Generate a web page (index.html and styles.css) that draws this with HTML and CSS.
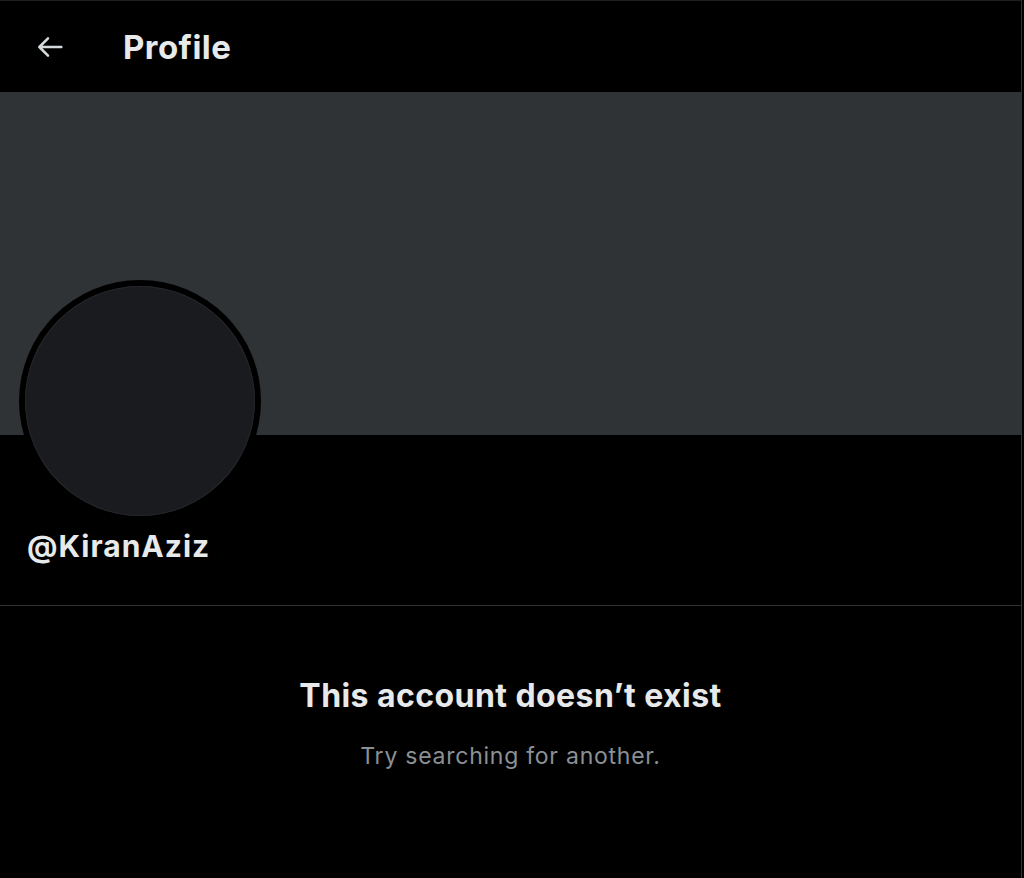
FILE: index.html
```html
<!DOCTYPE html>
<html lang="en">
<head>
<meta charset="utf-8">
<title>Profile</title>
<link rel="stylesheet" href="styles.css">
</head>
<body>
<main class="column">
  <header class="topbar">
    <button class="back" aria-label="Back">
      <svg viewBox="0 0 24 24" width="32" height="32"><path d="M20.5 12H4M10.5 5.5L4 12l6.5 6.5" fill="none" stroke="currentColor" stroke-width="1.9" stroke-linecap="round" stroke-linejoin="round"/></svg>
    </button>
    <h1 class="title">Profile</h1>
  </header>
  <section class="profile">
    <div class="banner"></div>
    <div class="avatar"><div class="avatar-inner"></div></div>
    <div class="info">
      <div class="handle">@KiranAziz</div>
    </div>
  </section>
  <section class="empty">
    <h2 class="empty-title">This account doesn’t exist</h2>
    <p class="empty-sub">Try searching for another.</p>
  </section>
</main>
</body>
</html>
```

FILE: styles.css
```css
html, body {
  margin: 0;
  padding: 0;
  background: #000;
}
body {
  font-family: Inter, "Liberation Sans", sans-serif;
  color: #e7e9ea;
  height: 878px;
  overflow: hidden;
}
.column {
  width: 1022px;
  height: 878px;
  border-right: 1px solid #2f3336;
  border-top: 1px solid #1d1f22;
  box-sizing: border-box;
}
.topbar {
  height: 91px;
  display: flex;
  align-items: center;
  box-sizing: border-box;
  padding-left: 34px;
}
.back {
  background: none;
  border: 0;
  padding: 0;
  color: #d6d9db;
  width: 32px;
  height: 32px;
  display: flex;
  align-items: center;
  justify-content: center;
  margin-right: 57px;
}
.title {
  margin: 0;
  font-size: 33px;
  font-weight: 700;
  letter-spacing: 0.45px;
  color: #e7e9ea;
}
.profile {
  position: relative;
  border-bottom: 1px solid #2f3336;
}
.banner {
  height: 343px;
  background: #2f3336;
}
.avatar {
  position: absolute;
  left: 19px;
  top: 188px;
  width: 242px;
  height: 242px;
  border-radius: 50%;
  background: #000;
  display: flex;
  align-items: center;
  justify-content: center;
}
.avatar-inner {
  width: 230px;
  height: 230px;
  border-radius: 50%;
  background: #1a1b1e;
  box-shadow: inset 0 0 0 1px #25272b;
}
.info {
  height: 170px;
  box-sizing: border-box;
  padding: 93px 0 0 27px;
}
.handle {
  font-size: 30px;
  font-weight: 700;
  letter-spacing: 1px;
  line-height: 36px;
  color: #e7e9ea;
}
.empty {
  text-align: center;
  padding-top: 70px;
}
.empty-title {
  margin: 0;
  font-size: 32px;
  font-weight: 700;
  letter-spacing: 0.43px;
  line-height: 40px;
  color: #e7e9ea;
}
.empty-sub {
  margin: 25px 0 0;
  font-size: 23px;
  letter-spacing: 0.75px;
  line-height: 30px;
  color: #8b9095;
}
```
